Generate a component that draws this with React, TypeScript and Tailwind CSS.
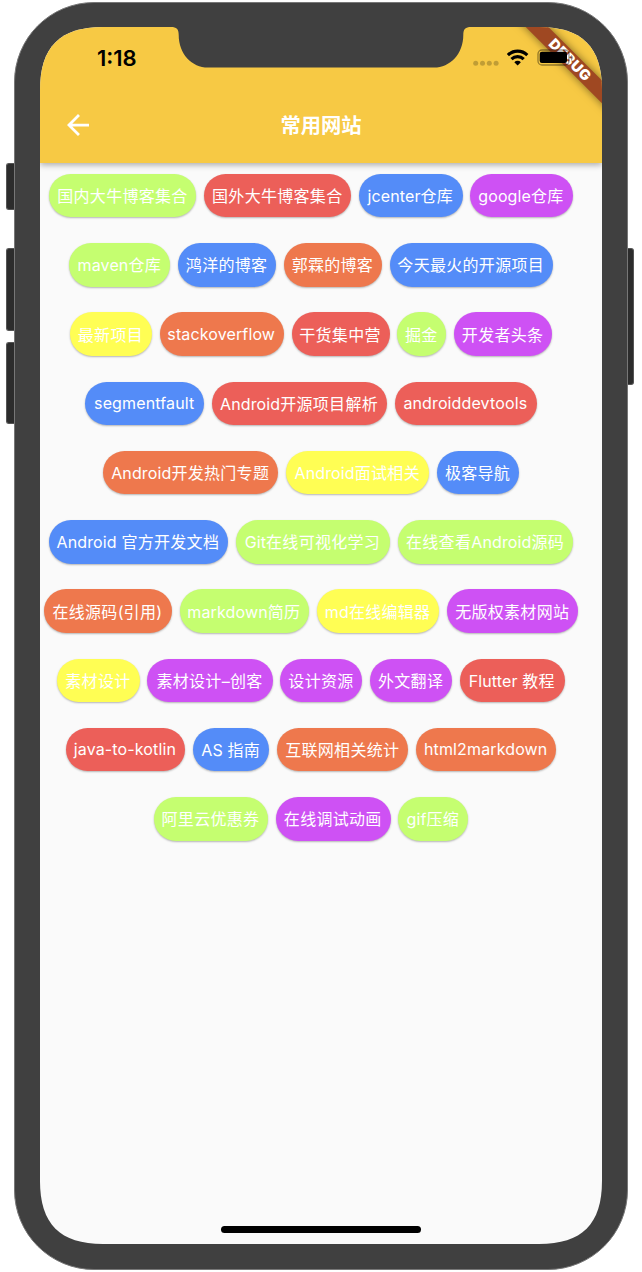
type Chip = { label: string; color: string; width: number };

const GREEN = "bg-[#c5fe70]";
const RED = "bg-[#ec5f59]";
const BLUE = "bg-[#548cf8]";
const PURPLE = "bg-[#ce51f4]";
const ORANGE = "bg-[#ee784d]";
const YELLOW = "bg-[#fffe54]";

const rows: Chip[][] = [
  [
    { label: "国内大牛博客集合", color: GREEN, width: 147 },
    { label: "国外大牛博客集合", color: RED, width: 147 },
    { label: "jcenter仓库", color: BLUE, width: 103.5 },
    { label: "google仓库", color: PURPLE, width: 102.2 },
  ],
  [
    { label: "maven仓库", color: GREEN, width: 101 },
    { label: "鸿洋的博客", color: BLUE, width: 98 },
    { label: "郭霖的博客", color: ORANGE, width: 98 },
    { label: "今天最火的开源项目", color: BLUE, width: 163 },
  ],
  [
    { label: "最新项目", color: YELLOW, width: 82 },
    { label: "stackoverflow", color: ORANGE, width: 124 },
    { label: "干货集中营", color: RED, width: 98 },
    { label: "掘金", color: GREEN, width: 49 },
    { label: "开发者头条", color: PURPLE, width: 98 },
  ],
  [
    { label: "segmentfault", color: BLUE, width: 118.5 },
    { label: "Android开源项目解析", color: RED, width: 175.5 },
    { label: "androiddevtools", color: RED, width: 141.5 },
  ],
  [
    { label: "Android开发热门专题", color: ORANGE, width: 175.5 },
    { label: "Android面试相关", color: YELLOW, width: 143 },
    { label: "极客导航", color: BLUE, width: 82 },
  ],
  [
    { label: "Android 官方开发文档", color: BLUE, width: 179.5 },
    { label: "Git在线可视化学习", color: GREEN, width: 154 },
    { label: "在线查看Android源码", color: GREEN, width: 175.7 },
  ],
  [
    { label: "在线源码(引用)", color: ORANGE, width: 128 },
    { label: "markdown简历", color: GREEN, width: 129.5 },
    { label: "md在线编辑器", color: YELLOW, width: 122.5 },
    { label: "无版权素材网站", color: PURPLE, width: 131 },
  ],
  [
    { label: "素材设计", color: YELLOW, width: 82.3 },
    { label: "素材设计–创客", color: PURPLE, width: 125.3 },
    { label: "设计资源", color: PURPLE, width: 82 },
    { label: "外文翻译", color: PURPLE, width: 81.7 },
    { label: "Flutter 教程", color: RED, width: 105 },
  ],
  [
    { label: "java-to-kotlin", color: RED, width: 119.5 },
    { label: "AS 指南", color: BLUE, width: 76.5 },
    { label: "互联网相关统计", color: ORANGE, width: 131 },
    { label: "html2markdown", color: ORANGE, width: 140.3 },
  ],
  [
    { label: "阿里云优惠券", color: GREEN, width: 114.5 },
    { label: "在线调试动画", color: PURPLE, width: 114.5 },
    { label: "gif压缩", color: GREEN, width: 70 },
  ],
];

/** Latin runs are set a little tighter than the Chinese glyphs around them. */
function ChipLabel({ text }: { text: string }) {
  const parts = text.split(/([\x20-\x7e]+)/).filter(Boolean);
  const latinOnly = /^[\x20-\x7e]+$/.test(text);
  return (
    <span className={`whitespace-pre ${latinOnly ? "pb-[2px]" : ""}`}>
      {parts.map((part, i) =>
        /^[\x20-\x7e]/.test(part) ? (
          <span key={i} className="tracking-[0.130px]">
            {part}
          </span>
        ) : (
          part
        ),
      )}
    </span>
  );
}

function SideButton({ className }: { className: string }) {
  return <div className={`border-[#555] bg-[#2c2c2c] ${className}`} />;
}

function Notch() {
  return (
    <svg className="absolute left-[131px] top-0" width="300" height="42" viewBox="0 0 300 42">
      <path
        d="M0 0H300C294.500 0 292.300 2 292.300 8C292.300 27 279 40.600 263 40.600H37C21 40.600 7.700 27 7.700 8C7.700 2 5.500 0 0 0Z"
        fill="#404040"
      />
    </svg>
  );
}

function StatusIcons() {
  return (
    <svg className="absolute left-[431px] top-[18px]" width="106" height="26" viewBox="471 45 106 26">
      <g fill="#000" fillOpacity="0.22">
        <circle cx="475.700" cy="63.200" r="2.500" />
        <circle cx="482.500" cy="63.200" r="2.500" />
        <circle cx="489.300" cy="63.200" r="2.500" />
        <circle cx="496.100" cy="63.200" r="2.500" />
      </g>
      <g fill="none" stroke="#000" strokeWidth="3.100">
        <path d="M507.900 55.100A13.800 13.800 0 0 1 527.300 55.100" />
        <path d="M511.500 59.200A8.600 8.600 0 0 1 523.700 59.200" />
      </g>
      <path d="M517.600 65.400L514.300 62.200A4.700 4.700 0 0 1 520.900 62.200Z" />
      <rect x="538" y="50" width="31" height="15" rx="4" fill="none" stroke="#000" strokeOpacity="0.4" strokeWidth="1.300" />
      <path d="M571 55V60.500Q572.800 59.500 572.800 57.700T571 55Z" fillOpacity="0.4" />
      <rect x="539.700" y="51.700" width="27.300" height="11.300" rx="2.200" />
    </svg>
  );
}

function DebugBanner() {
  return (
    <div className="absolute left-[459.500px] top-[24.500px] flex h-[16.400px] w-[140px] rotate-45 items-center justify-center bg-[#9f4822] text-[14.500px] leading-none font-black tracking-[0.600px] text-white shadow-[0_0_8px_rgba(0,0,0,0.5)]">
      DEBUG
    </div>
  );
}

function Header() {
  return (
    <header className="relative z-10 flex h-[136px] shrink-0 flex-col bg-[#f7c944] shadow-[0_2px_6px_rgba(0,0,0,0.32)]">
      <div className="h-[60px] pt-[15px] pl-[57px] text-[22px] leading-8 font-semibold text-black">1:18</div>
      <div className="grid h-[76px] grid-cols-[1fr_auto_1fr] items-center">
        <svg className="ml-[27px]" width="22" height="22" viewBox="4 4 16 16" fill="#fff">
          <path d="M20 11H7.830l5.590-5.590L12 4l-8 8 8 8 1.410-1.410L7.830 13H20v-2z" />
        </svg>
        <h1 className="pt-[2px] text-[20.300px] leading-7 font-semibold text-white">常用网站</h1>
        <span />
      </div>
    </header>
  );
}

export default function App() {
  return (
    <div className="flex h-[1272px] w-[642px] bg-white pt-[2px] pl-[6px] font-[Inter,'Noto_Sans_CJK_SC',sans-serif]">
      <div className="flex w-2 flex-col pt-[161px]">
        <SideButton className="h-[47px] rounded-l-[3px] border-y border-l" />
        <SideButton className="mt-[38px] h-[83px] rounded-l-[3px] border-y border-l" />
        <SideButton className="mt-[11px] h-[82px] rounded-l-[3px] border-y border-l" />
      </div>

      <div className="h-[1268px] w-[614px] rounded-[80px] border border-[#777] bg-[#404040] pt-6 pl-[25px]">
        <div className="relative flex h-[1217px] w-[562px] flex-col bg-[#fafafa] [clip-path:path('M0_63C0_20_20_0_63_0H499C542_0_562_20_562_63V1154C562_1197_542_1217_499_1217H63C20_1217_0_1197_0_1154Z')]">
          <Header />
          <main className="flex flex-1 flex-col gap-[25.750px] pt-[10.800px] pr-5">
            {rows.map((row, i) => (
              <div key={i} className="flex justify-center gap-[7.800px]">
                {row.map((chip) => (
                  <div
                    key={chip.label}
                    style={{ width: chip.width }}
                    className={`flex h-[43.500px] shrink-0 items-center justify-center rounded-full pt-px pr-px text-[16px] leading-6 tracking-[0.300px] whitespace-nowrap text-white shadow-[0_1px_2px_rgba(0,0,0,0.28)] ${chip.color}`}
                  >
                    <ChipLabel text={chip.label} />
                  </div>
                ))}
              </div>
            ))}
          </main>
          <div className="mb-[11px] h-[6.700px] w-[200.500px] shrink-0 self-center rounded-full bg-black" />
          <div className="absolute inset-0 z-20">
            <DebugBanner />
            <Notch />
            <StatusIcons />
          </div>
        </div>
      </div>

      <div className="flex w-[6px] flex-col pt-[246px]">
        <SideButton className="h-[137px] rounded-r-[3px] border-y border-r" />
      </div>
    </div>
  );
}
